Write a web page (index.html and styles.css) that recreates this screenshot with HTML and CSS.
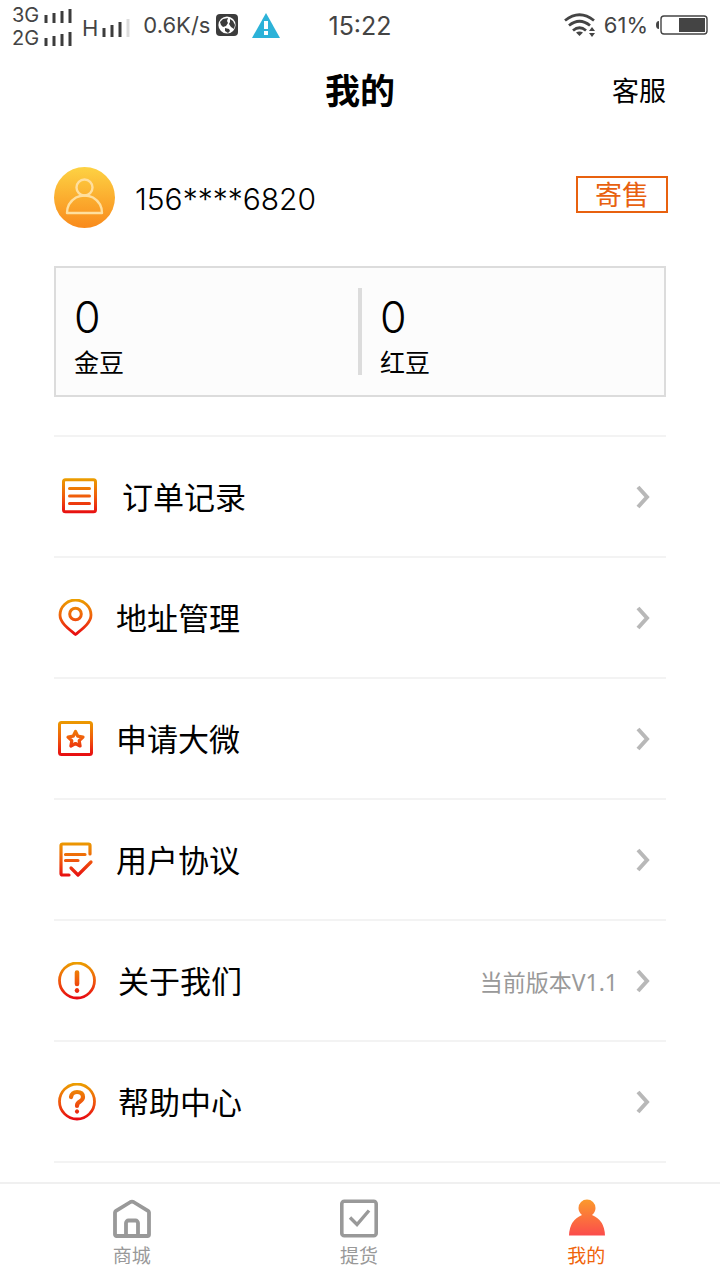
FILE: index.html
```
<!DOCTYPE html>
<html lang="zh-CN">
<head>
    <meta charset="UTF-8">
    <meta name="viewport" content="width=device-width, initial-scale=1.0">
    <title>我的</title>
    <link rel="stylesheet" href="styles.css">
</head>
<body>
    <!-- Shared gradients -->
    <svg class="defs" width="0" height="0" aria-hidden="true">
        <defs>
            <linearGradient id="flame" gradientUnits="userSpaceOnUse" x1="0" y1="0" x2="0" y2="38">
                <stop offset="0" stop-color="#eba000"/>
                <stop offset="0.5" stop-color="#f05a0c"/>
                <stop offset="1" stop-color="#e60012"/>
            </linearGradient>
            <linearGradient id="sun" x1="0" y1="0" x2="0" y2="1">
                <stop offset="0" stop-color="#fdd243"/>
                <stop offset="1" stop-color="#f98a1c"/>
            </linearGradient>
            <linearGradient id="person" x1="0" y1="0" x2="0" y2="1">
                <stop offset="0" stop-color="#fb9a2c"/>
                <stop offset="1" stop-color="#fb4c4c"/>
            </linearGradient>
        </defs>
    </svg>

    <div class="status-bar">
        <div class="status-left">
            <div class="sims">
                <div class="sim">
                    <span>3G</span>
                    <svg width="28" height="14" viewBox="0 0 28 14"><path d="M2 6v8M10 4v10M18 2v12M26 0v14" stroke="#3c3c3c" stroke-width="3"/></svg>
                </div>
                <div class="sim">
                    <span>2G</span>
                    <svg width="28" height="14" viewBox="0 0 28 14"><path d="M2 6v8M10 4v10M18 2v12M26 0v14" stroke="#3c3c3c" stroke-width="3"/></svg>
                </div>
            </div>
            <span class="network">H</span>
            <svg class="signal" width="28" height="18" viewBox="0 0 28 18"><path d="M2 9v9M10 6v12M18 3v15" stroke="#3c3c3c" stroke-width="3"/><path d="M26 0v18" stroke="#dcdcdc" stroke-width="3"/></svg>
            <span class="speed">0.6K/s</span>
            <svg class="globe" width="22" height="22" viewBox="0 0 22 22">
                <rect width="22" height="22" rx="4" fill="#3c3c3c"/>
                <circle cx="11" cy="11" r="8.600" fill="#fff"/>
                <path d="M4 8l3-3 5-1-1 3 1 2-2 3-3 1-2-2zM14 5l3 2 2 4-1 4-3-2-2-3 1-2zM9 14l4 1 1 2-2 2-3-2z" fill="#3c3c3c"/>
            </svg>
            <svg width="28" height="25" viewBox="0 0 28 25">
                <path d="M14 0l14 25H0z" fill="#2cb2d8"/>
                <path d="M14 8v8M14 18v4" stroke="#fff" stroke-width="4"/>
            </svg>
        </div>
        <time class="clock">15:22</time>
        <div class="status-right">
            <svg width="32" height="24" viewBox="0 0 32 24">
                <g fill="none" stroke="#444" stroke-width="2.8">
                    <path d="M1 7.500Q15.500-4 30 7.500"/>
                    <path d="M5 12.500Q15.500 4 26 12.500"/>
                    <path d="M9 17.500Q15.500 12 22 17.500"/>
                </g>
                <path d="M12 19.500q3.500-2 7 0L15.500 23z" fill="#444"/>
                <path d="M28 14l3 4h-6zM28 24l-3-4h6z" fill="#444"/>
            </svg>
            <span>61%</span>
            <svg class="battery" width="52" height="20" viewBox="0 0 52 20">
                <path d="M3 6q-3 0-3 4t3 4z" fill="#444"/>
                <rect x="5" y="1" width="46" height="18" rx="3" fill="#fff" stroke="#444" stroke-width="1.4"/>
                <rect x="23" y="3" width="26" height="14" fill="#444"/>
            </svg>
        </div>
    </div>

    <header class="header">
        <h1>我的</h1>
        <a href="#service">客服</a>
    </header>

    <main class="content">
        <section class="profile">
            <svg class="avatar" width="61" height="61" viewBox="0 0 61 61">
                <circle cx="30.500" cy="30.500" r="30.500" fill="url(#sun)"/>
                <g fill="none" stroke="#ffdf9e" stroke-width="2.400">
                    <circle cx="30.500" cy="20.500" r="8"/>
                    <path d="M13 46h35q0-10-9-15.500-8.500-4-17 0Q13 36 13 46z" stroke-linejoin="round"/>
                </g>
            </svg>
            <span class="phone">156****6820</span>
            <button class="sell-btn" type="button">寄售</button>
        </section>

        <section class="balance">
            <div class="balance-item">
                <strong>0</strong>
                <span>金豆</span>
            </div>
            <div class="divider"></div>
            <div class="balance-item">
                <strong>0</strong>
                <span>红豆</span>
            </div>
        </section>

        <ul class="menu">
            <li>
                <a href="#orders">
                    <svg class="icon" width="42" height="38" viewBox="0 0 42 38">
                        <rect x="5.500" y="1.800" width="32" height="32" rx="2" stroke-width="3"/>
                        <path d="M11.500 10.500h20M11.500 18h20M11.500 25.500h20" stroke-width="3"/>
                    </svg>
                    <span class="label">订单记录</span>
                    <svg class="arrow" width="14" height="24" viewBox="0 0 14 24"><path d="M2 2l9 10-9 10"/></svg>
                </a>
            </li>
            <li>
                <a href="#address">
                    <svg class="icon" width="36" height="38" viewBox="0 0 36 38">
                        <path d="M17.500 35.500C11 30 2 24 2 16a15.500 15 0 0 1 31 0C33 24 24 30 17.500 35.500z" stroke-width="2.800"/>
                        <circle cx="17.500" cy="15" r="5.800" stroke-width="3"/>
                    </svg>
                    <span class="label">地址管理</span>
                    <svg class="arrow" width="14" height="24" viewBox="0 0 14 24"><path d="M2 2l9 10-9 10"/></svg>
                </a>
            </li>
            <li>
                <a href="#apply">
                    <svg class="icon" width="36" height="38" viewBox="0 0 36 38">
                        <rect x="1.500" y="2.500" width="32" height="32" rx="2" stroke-width="3"/>
                        <path d="M17.500 11.500l2.300 4.700 5.200.8-3.800 3.700.9 5.300-4.600-2.500-4.600 2.500.9-5.300L10 17l5.200-.8z" stroke-width="3.200"/>
                    </svg>
                    <span class="label">申请大微</span>
                    <svg class="arrow" width="14" height="24" viewBox="0 0 14 24"><path d="M2 2l9 10-9 10"/></svg>
                </a>
            </li>
            <li>
                <a href="#agreement">
                    <svg class="icon" width="36" height="38" viewBox="0 0 36 38">
                        <path d="M32 13V4.500a1.500 1.500 0 0 0-1.500-1.500H4.500A1.500 1.500 0 0 0 3 4.500v28A1.500 1.500 0 0 0 4.500 34H11M7.500 13.500H27M7.500 19.500H20M13 27l7 7 13-13" stroke-width="3.200"/>
                    </svg>
                    <span class="label">用户协议</span>
                    <svg class="arrow" width="14" height="24" viewBox="0 0 14 24"><path d="M2 2l9 10-9 10"/></svg>
                </a>
            </li>
            <li>
                <a href="#about">
                    <svg class="icon" width="38" height="38" viewBox="0 0 38 38">
                        <circle cx="19" cy="18.500" r="17.500" stroke-width="2.800"/>
                        <path d="M19 10.500L19.010 22M19 28.500l.01.010" stroke-width="4.600"/>
                    </svg>
                    <span class="label">关于我们</span>
                    <span class="version">当前版本V1.1</span>
                    <svg class="arrow" width="14" height="24" viewBox="0 0 14 24"><path d="M2 2l9 10-9 10"/></svg>
                </a>
            </li>
            <li>
                <a href="#help">
                    <svg class="icon" width="38" height="38" viewBox="0 0 38 38">
                        <circle cx="19" cy="18.500" r="17.500" stroke-width="2.800"/>
                        <path d="M13 14q1-5 6-5 6 0 6 5 0 2.500-3 4.500-3 1.500-3 4.500M19 28.500l.01.010" stroke-width="4.200"/>
                    </svg>
                    <span class="label">帮助中心</span>
                    <svg class="arrow" width="14" height="24" viewBox="0 0 14 24"><path d="M2 2l9 10-9 10"/></svg>
                </a>
            </li>
        </ul>
    </main>

    <nav class="tab-bar">
        <a href="#mall">
            <svg width="40" height="40" viewBox="0 0 40 40">
                <path d="M3 13.500q0-1 1-1.700L18.500 3q1.500-.8 3 0L36 11.800q1 .7 1 1.700V35.500a1.500 1.500 0 0 1-1.500 1.500h-31A1.500 1.500 0 0 1 3 35.500zM14 36.500V24a2.500 2.500 0 0 1 2.500-2.500h7A2.500 2.500 0 0 1 26 24v12.500" fill="none" stroke="#999" stroke-width="3.800" stroke-linejoin="round"/>
            </svg>
            <span>商城</span>
        </a>
        <a href="#pickup">
            <svg width="40" height="40" viewBox="0 0 40 40">
                <rect x="2.800" y="2.300" width="34.400" height="34.400" rx="2.500" fill="none" stroke="#999" stroke-width="3.600"/>
                <path d="M11 18.500l7 7 12-14" fill="none" stroke="#999" stroke-width="3.400"/>
            </svg>
            <span>提货</span>
        </a>
        <a href="#me" class="active">
            <svg width="40" height="40" viewBox="0 0 40 40">
                <path d="M21 .5a8.500 8.500 0 0 1 8.500 8.500q0 4-3.500 7 12.500 5 13 20.500H3Q3.500 21 16 16q-3.500-3-3.500-7A8.500 8.500 0 0 1 21 .5z" fill="url(#person)"/>
            </svg>
            <span>我的</span>
        </a>
    </nav>
</body>
</html>
```

FILE: styles.css
```
* {
    box-sizing: border-box;
}

body {
    margin: 0;
    min-height: 100vh;
    display: flex;
    flex-direction: column;
    font-family: Inter, "Noto Sans CJK SC", sans-serif;
    background: #fff;
    color: #000;
}

a {
    color: inherit;
    text-decoration: none;
}

svg {
    display: block;
    flex-shrink: 0;
}

.defs {
    position: absolute;
}

/* Status bar */
.status-bar {
    display: grid;
    grid-template-columns: 1fr auto 1fr;
    align-items: center;
    height: 48px;
    padding: 0 12px;
    color: #444;
    font-size: 22px;
    line-height: 24px;
}

.status-left,
.status-right {
    display: flex;
    align-items: center;
}

.status-right {
    justify-content: flex-end;
    gap: 8px;
}

.sims {
    padding-top: 4px;
}

.sim {
    display: flex;
    align-items: center;
    gap: 6px;
    font-size: 20px;
    line-height: 23px;
}

.sim span {
    width: 26px;
}

.network {
    margin: 6px 4px 0 10px;
}

.signal {
    margin: 6px 13px 0 0;
}

.globe {
    margin: 0 14px 0 6px;
}

.clock {
    padding-top: 2px;
    font-size: 25px;
}

/* Header */
.header {
    display: grid;
    grid-template-columns: 1fr auto 1fr;
    align-items: center;
    height: 86px;
    padding: 0 54px;
}

.header h1 {
    grid-column: 2;
    margin: 0;
    font-size: 35px;
    font-weight: 700;
    line-height: 48px;
}

.header a {
    justify-self: end;
    padding-top: 2px;
    font-size: 27px;
    line-height: 40px;
}

.content {
    flex: 1;
    padding: 33px 54px 19px;
}

/* Profile */
.profile {
    display: flex;
    align-items: center;
    margin-bottom: 38px;
}

.phone {
    flex: 1;
    margin-left: 20px;
    padding-top: 2px;
    font-size: 30px;
    font-weight: 300;
    line-height: 40px;
}

.sell-btn {
    align-self: flex-start;
    margin: 9px -2px 0 0;
    width: 92px;
    height: 37px;
    padding: 2px 0 0;
    border: 2px solid #e8610f;
    background: #fff;
    color: #e8610f;
    font-family: inherit;
    font-size: 27px;
    line-height: 32px;
}

/* Balance */
.balance {
    display: grid;
    grid-template-columns: 1fr 4px 1fr;
    padding: 20px 0;
    margin-bottom: 38px;
    border: 2px solid #dcdcdc;
    background: #fcfcfc;
}

.divider {
    background: #dcdcdc;
}

.balance-item {
    display: flex;
    flex-direction: column;
    padding-left: 18px;
    height: 87px;
}

.balance-item strong {
    font-size: 43px;
    font-weight: 300;
    line-height: 58px;
}

.balance-item span {
    font-size: 25px;
    line-height: 34px;
}

/* Menu */
.menu {
    margin: 0;
    padding: 0;
    list-style: none;
    border-top: 2px solid #f3f3f3;
}

.menu li {
    border-bottom: 2px solid #f3f3f3;
}

.menu a {
    display: flex;
    align-items: center;
    height: 119px;
    padding: 0 16px 0 4px;
}

.icon {
    fill: none;
    stroke: url(#flame);
    stroke-linecap: round;
    stroke-linejoin: round;
}

.label {
    flex: 1;
    margin-left: 22px;
    padding-top: 2px;
    font-size: 31px;
    line-height: 44px;
}

.version {
    margin-right: 18px;
    padding-top: 2px;
    color: #999;
    font-family: "Noto Sans", "Noto Sans CJK SC", sans-serif;
    font-size: 23px;
    line-height: 32px;
}

.arrow {
    fill: none;
    stroke: #b8b8b8;
    stroke-width: 4;
}

/* Bottom tabs */
.tab-bar {
    display: grid;
    grid-template-columns: repeat(3, 1fr);
    height: 98px;
    padding: 15px 20px 0 18px;
    border-top: 2px solid #f0f0f0;
    background: #fff;
}

.tab-bar a {
    display: flex;
    flex-direction: column;
    align-items: center;
    color: #999;
    font-size: 19px;
    line-height: 36px;
}

.tab-bar .active {
    color: #f0640a;
}
```
